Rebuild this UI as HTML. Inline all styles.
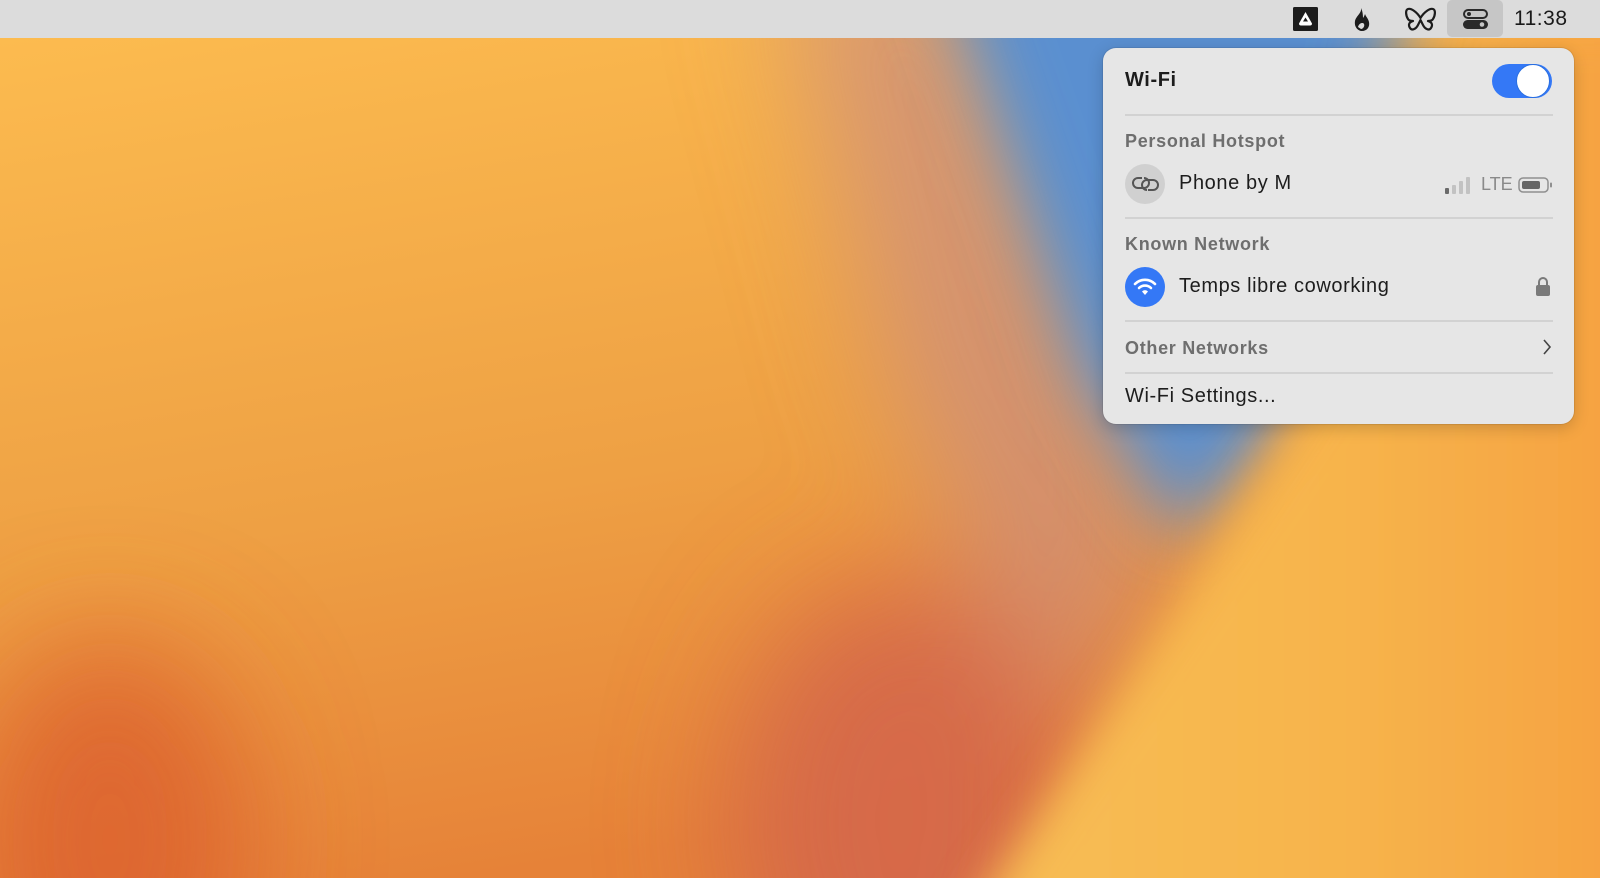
<!DOCTYPE html>
<html><head><meta charset="utf-8"><style>
*{margin:0;padding:0;box-sizing:border-box}
html,body{width:1600px;height:878px;overflow:hidden;font-family:"Liberation Sans",sans-serif}
#wrap{position:relative;width:1600px;height:878px;overflow:hidden}
#bg{position:absolute;left:0;top:0;display:block}
#bar{position:absolute;left:0;top:0;width:1600px;height:38px;background:#dcdcdc}
.ic{position:absolute;display:block}
#time{position:absolute;left:1514px;top:7px;font-size:21px;color:#1a1a1a;letter-spacing:.5px}
#panel{position:absolute;left:1103px;top:48px;width:471px;height:376px;background:#e6e6e6;border-radius:13px;box-shadow:0 4px 16px rgba(0,0,0,.18),0 0 0 1px rgba(0,0,0,.08);overflow:hidden}
.t{position:absolute;white-space:nowrap;display:block}
.h{font-weight:bold;color:#6e6e6e;font-size:18px;letter-spacing:.7px}
.n{color:#1d1d1d;font-size:20px;letter-spacing:.6px}
.sep{position:absolute;left:22px;width:428px;height:2px;background:#d2d2d2}
</style></head><body><div id="wrap">
<svg id="bg" width="1600" height="878" viewBox="0 0 1600 878">
<defs>
<filter id="b1" x="-50%" y="-50%" width="200%" height="200%"><feGaussianBlur stdDeviation="60"/></filter>
<filter id="b2" x="-50%" y="-50%" width="200%" height="200%"><feGaussianBlur stdDeviation="35"/></filter>
<filter id="b3" x="-50%" y="-50%" width="200%" height="200%"><feGaussianBlur stdDeviation="22"/></filter>
<linearGradient id="g0" x1="0" y1="0" x2="0.3" y2="1"><stop offset="0" stop-color="#fdbd50"/><stop offset="0.6" stop-color="#eea044"/><stop offset="1" stop-color="#e68238"/></linearGradient>
<linearGradient id="gy" x1="0" y1="0" x2="1" y2="0"><stop offset="0" stop-color="#f7bf56"/><stop offset="0.5" stop-color="#f7b44c"/><stop offset="1" stop-color="#f69a3c"/></linearGradient>
</defs>
<rect width="1600" height="878" fill="url(#g0)"/>
<g filter="url(#b1)">
<ellipse cx="110" cy="840" rx="140" ry="200" fill="#dc6030" opacity=".85"/>
<ellipse cx="900" cy="820" rx="170" ry="240" fill="#d4664a" opacity=".9"/>
<polygon points="780,-50 960,-50 1160,560 1060,720 900,400" fill="#c98c80" opacity=".75"/>
</g>
<g filter="url(#b2)">
<polygon points="930,-60 1420,-60 1330,300 1270,440 1180,540 1080,380" fill="#5a8fd0"/>
</g>
<g filter="url(#b3)">
<polygon points="1330,370 1520,20 1750,20 1750,980 930,980" fill="url(#gy)"/>
</g>
</svg>
<div id="bar"></div>
<svg class="ic" style="left:1293px;top:7px" width="25" height="24" viewBox="0 0 25 24"><rect x="0" y="0" width="25" height="24" rx="1.5" fill="#1c1c1c"/><path d="M12.5 5 L19 16.5 Q19 18.5 17 18.5 L8 18.5 Q6 18.5 6 16.5 Z" fill="#fff"/><path d="M12.5 10.5 L15 14.5 L10 14.5Z" fill="#1c1c1c"/></svg>
<svg class="ic" style="left:1352px;top:7px" width="19" height="25" viewBox="0 0 19 25"><path d="M9 1 C10 6 4 9 3 14 C2 20 6 24 10 24 C15 24 18 20 17 15 C16 11 14 10 13 7 C12 10 11 11 11 11 C11 6 10 3 9 1Z" fill="#1c1c1c"/><path d="M6 20 C7 16 11 15 12 17 C13 19 11 22 9 22Z" fill="#dcdcdc"/></svg>
<svg class="ic" style="left:1405px;top:7px" width="31" height="25" viewBox="0 0 31 25"><path d="M15.5 11 C12 5 6 1 3 2 C0 3 1 9 3 12 C4 14 7 14 8 14 C4 15 3 18 5 21 C7 24 11 22 13 18 L15.5 13 L18 18 C20 22 24 24 26 21 C28 18 27 15 23 14 C24 14 27 14 28 12 C30 9 31 3 28 2 C25 1 19 5 15.5 11Z" fill="none" stroke="#1c1c1c" stroke-width="2.2" stroke-linejoin="round"/></svg>
<div class="ic" style="left:1447px;top:0;width:56px;height:37px;background:#c6c6c6;border-radius:5px"></div>
<svg class="ic" style="left:1463px;top:9px" width="25" height="20" viewBox="0 0 25 20"><rect x="1" y="1" width="23" height="8" rx="4" fill="none" stroke="#2a2a2a" stroke-width="2"/><circle cx="6" cy="5" r="2" fill="#2a2a2a"/><rect x="0" y="11" width="25" height="9" rx="4.5" fill="#2a2a2a"/><circle cx="19" cy="15.5" r="2.3" fill="#c6c6c6"/></svg>
<div id="time">11:38</div>

<div id="panel">
<div class="t" style="left:22px;top:21px;font-size:20px;font-weight:bold;color:#1d1d1d;letter-spacing:.6px">Wi-Fi</div>
<div class="t" style="left:389px;top:16px;width:60px;height:34px;border-radius:17px;background:#3478f6"></div>
<div class="t" style="left:413px;top:16px;width:34px;height:34px;border-radius:17px;background:#fff;border:1px solid #2a6fe0"></div>
<div class="sep" style="top:66px"></div>
<div class="t h" style="left:22px;top:83px">Personal Hotspot</div>
<div class="t" style="left:22px;top:116px;width:40px;height:40px;border-radius:20px;background:#d0d0d0"></div>
<svg class="t" style="left:29px;top:126px" width="28" height="20" viewBox="0 0 28 20"><path d="M10 4 H6 A5 5 0 0 0 6 14 H12 A5 5 0 0 0 12 4" fill="none" stroke="#555" stroke-width="2"/><path d="M16 16 H21 A5 5 0 0 0 21 6 H15 A5 5 0 0 0 15 16" fill="none" stroke="#555" stroke-width="2"/></svg>
<div class="t n" style="left:76px;top:124px">Phone by M</div>
<svg class="t" style="left:342px;top:128px" width="28" height="18" viewBox="0 0 28 18"><rect x="0" y="12" width="4" height="6" rx="1" fill="#6a6a6a"/><rect x="7" y="9" width="4" height="9" rx="1" fill="#c2c2c2"/><rect x="14" y="5" width="4" height="13" rx="1" fill="#c2c2c2"/><rect x="21" y="1" width="4" height="17" rx="1" fill="#c2c2c2"/></svg>
<div class="t" style="left:378px;top:126px;font-size:18px;color:#8a8a8a">LTE</div>
<svg class="t" style="left:415px;top:129px" width="35" height="16" viewBox="0 0 35 16"><rect x="1" y="1" width="29" height="14" rx="4" fill="none" stroke="#8f8f8f" stroke-width="1.5"/><rect x="4" y="4" width="18" height="8" rx="2" fill="#666"/><rect x="32" y="5.5" width="2" height="5" rx="1" fill="#8f8f8f"/></svg>
<div class="sep" style="top:169px"></div>
<div class="t h" style="left:22px;top:186px">Known Network</div>
<div class="t" style="left:22px;top:219px;width:40px;height:40px;border-radius:20px;background:#3478f6"></div>
<svg class="t" style="left:30px;top:228px" width="24" height="22" viewBox="0 0 24 22"><path d="M2 8 A14 14 0 0 1 22 8" fill="none" stroke="#fff" stroke-width="2.6" stroke-linecap="round"/><path d="M6 12 A8.5 8.5 0 0 1 18 12" fill="none" stroke="#fff" stroke-width="2.6" stroke-linecap="round"/><path d="M12 19 L9 15.5 A4 4 0 0 1 15 15.5 Z" fill="#fff"/></svg>
<div class="t n" style="left:76px;top:227px">Temps libre coworking</div>
<svg class="t" style="left:432px;top:228px" width="16" height="21" viewBox="0 0 16 21"><path d="M4 9 V6 A4 4 0 0 1 12 6 V9" fill="none" stroke="#7a7a7a" stroke-width="2"/><rect x="1" y="9" width="14" height="11" rx="2" fill="#7a7a7a"/></svg>
<div class="sep" style="top:272px"></div>
<div class="t h" style="left:22px;top:290px">Other Networks</div>
<svg class="t" style="left:439px;top:290px" width="10" height="18" viewBox="0 0 10 18"><path d="M2 2 L8 9 L2 16" fill="none" stroke="#444" stroke-width="1.6"/></svg>
<div class="sep" style="top:324px"></div>
<div class="t n" style="left:22px;top:337px">Wi-Fi Settings...</div>
</div>
</div></body></html>
